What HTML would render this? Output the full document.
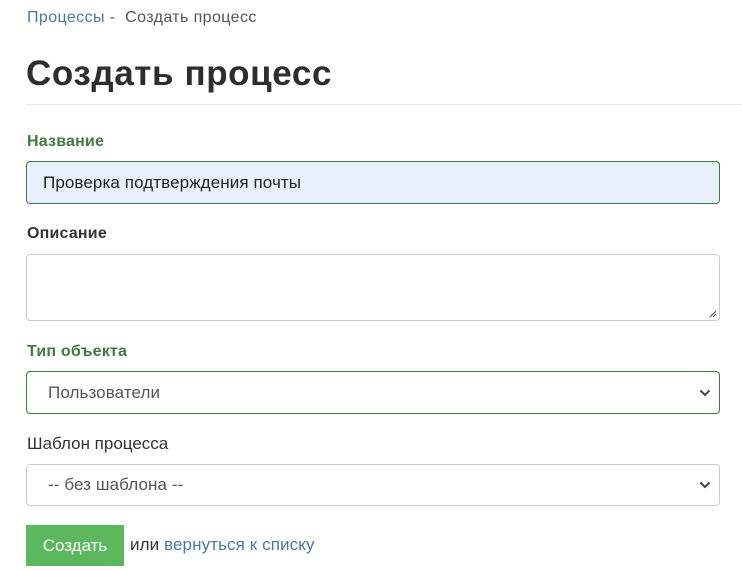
<!DOCTYPE html><html><head><style>
body{margin:0;background:#fff;font-family:"Liberation Sans",sans-serif;color:#333;}
.a{position:absolute}
.bc{left:27px;top:9px;font-size:16px;color:#555;letter-spacing:0.4px}
.bc span{color:#4a78a8}
h1{position:absolute;left:26px;top:54px;margin:0;font-size:35px;font-weight:bold;color:#2e2e2e;letter-spacing:0.6px}
.hr{left:26px;top:104px;width:716px;height:1px;background:#eaeaea}
.lbl{left:27px;font-size:16px;font-weight:bold;letter-spacing:0.2px}
.g{color:#3f7a3f}
.box{left:26px;width:692px;border:1px solid #ccc;border-radius:4px;background:#fff;font-size:17px;color:#555;letter-spacing:0.1px}
.chev{position:absolute;right:8px;top:50%;margin-top:-4px}
</style></head><body>
<div class="a bc"><span>Процессы</span> -&nbsp; Создать процесс</div>
<h1>Создать процесс</h1>
<div class="a hr"></div>
<div class="a lbl g" style="top:133px">Название</div>
<div class="a box" style="top:161px;height:41px;background:#e8f0fe;border-color:#3f7a3f;color:#222"><div style="position:absolute;left:16px;top:11px">Проверка подтверждения почты</div></div>
<div class="a lbl" style="top:225px">Описание</div>
<div class="a box" style="top:254px;height:65px"><svg style="position:absolute;right:2px;bottom:2px" width="10" height="10"><path d="M9 3L3 9M9 6L6 9" stroke="#555" stroke-width="1.2"/></svg></div>
<div class="a lbl g" style="top:343px">Тип объекта</div>
<div class="a box" style="top:371px;height:41px;border-color:#3f7a3f"><div style="position:absolute;left:21px;top:11px">Пользователи</div><svg class="chev" width="12" height="8"><path d="M1.5 1.5L6 6L10.5 1.5" stroke="#444" stroke-width="2" fill="none"/></svg></div>
<div class="a" style="left:27px;top:434px;font-size:17px;color:#333">Шаблон процесса</div>
<div class="a box" style="top:464px;height:40px"><div style="position:absolute;left:21px;top:10px">-- без шаблона --</div><svg class="chev" width="12" height="8"><path d="M1.5 1.5L6 6L10.5 1.5" stroke="#444" stroke-width="2" fill="none"/></svg></div>
<div class="a" style="left:26px;top:525px;width:98px;height:41px;background:#5cb85c;color:#fff;font-size:17px;line-height:42px;text-align:center">Создать</div>
<div class="a" style="left:130px;top:535px;font-size:17px;color:#333;letter-spacing:0.1px">или <span style="color:#4a78a8">вернуться к списку</span></div>
</body></html>
